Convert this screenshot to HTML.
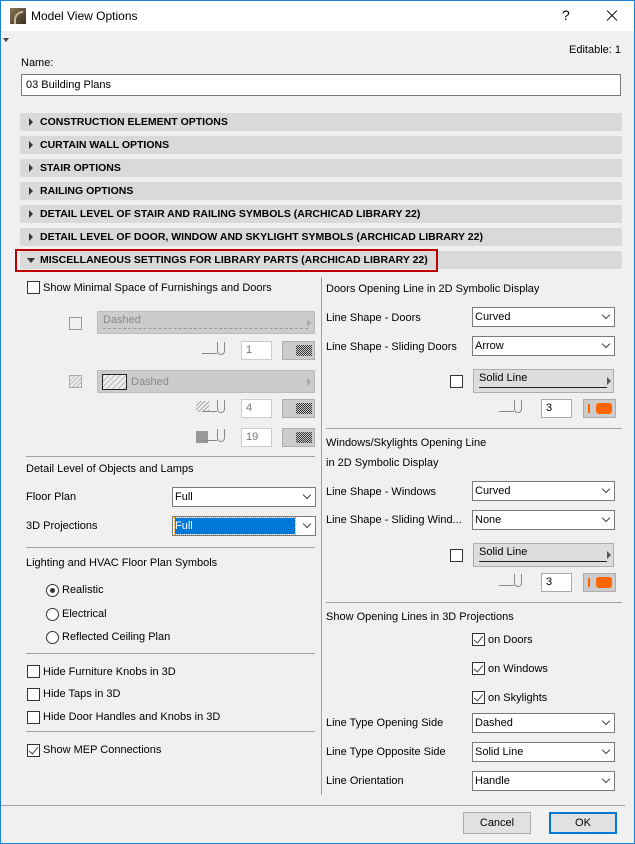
<!DOCTYPE html>
<html><head><meta charset="utf-8"><style>
*{box-sizing:border-box;margin:0;padding:0}
body{width:635px;height:844px;position:relative;background:#f0f0f0;font-family:"Liberation Sans",sans-serif;font-size:11px;color:#000;overflow:hidden}
.a{position:absolute}
.t{position:absolute;line-height:14px;white-space:nowrap}
.hd{position:absolute;left:20px;width:602px;height:18px;background:#d9d9d9;border-radius:2px;font-weight:bold;font-size:10.5px;line-height:18px;padding-left:20px}
.hd:before{content:"";position:absolute;left:9px;top:5px;border-left:4px solid #333;border-top:4px solid transparent;border-bottom:4px solid transparent}
.hd.o:before{left:7px;top:7px;border-top:5px solid #333;border-left:4px solid transparent;border-right:4px solid transparent;border-bottom:0}
.cb{position:absolute;width:13px;height:13px;border:1px solid #333;background:#fff}
.cb.g{border-color:#999;background:#f0f0f0}
.ck:after{content:"";position:absolute;left:3px;top:0px;width:4px;height:8px;border:solid #444;border-width:0 1.5px 1.5px 0;transform:rotate(40deg)}
.sel{position:absolute;height:20px;background:#fff;border:1px solid #7a7a7a;line-height:18px;padding-left:2px}
.sel:after{content:"";position:absolute;right:5px;top:4px;width:5px;height:5px;border:solid #444;border-width:0 1px 1px 0;transform:rotate(45deg)}
.rd{position:absolute;width:13px;height:13px;border:1px solid #333;border-radius:50%;background:#fff}
.hr{position:absolute;height:1px;background:#a0a0a0}
.inp{position:absolute;width:31px;height:19px;border:1px solid #ccc;background:#fff;line-height:17px;padding-left:4px}
.pb{position:absolute;width:33px;height:19px;background:#ccc;border:1px solid #adadad}
.pen{position:absolute;width:8px;height:13px;border:1px solid #888;border-top:0;border-radius:0 0 4px 4px}
.pen:before{content:"";position:absolute;left:-16px;bottom:0;width:15px;height:1px;background:#888}
</style></head><body>
<div class="a" style="left:0;top:0;width:635px;height:31px;background:#fff"></div>
<div class="a" style="left:0;top:0;width:1px;height:844px;background:#1883d7"></div>
<div class="a" style="right:0;top:0;width:1px;height:844px;background:#1883d7"></div>
<div class="a" style="left:0;bottom:0;width:635px;height:1px;background:#1883d7"></div>
<div class="a" style="left:0;top:0;width:635px;height:1px;background:#1883d7"></div>
<div class="a" style="left:10px;top:8px;width:16px;height:16px;background:linear-gradient(135deg,#8a7658,#3a3020)"><div class="a" style="left:4px;top:3px;width:9px;height:13px;border:2px solid #c8b898;border-bottom:0;border-right:0;border-radius:9px 0 0 0"></div></div>
<div class="t" style="left:31px;top:8px;font-size:12px;line-height:16px">Model View Options</div>
<div class="t" style="left:562px;top:7px;font-size:14px;line-height:16px">?</div>
<div class="a" style="left:605px;top:15px;width:14px;height:1px;background:#000;transform:rotate(45deg)"></div>
<div class="a" style="left:605px;top:15px;width:14px;height:1px;background:#000;transform:rotate(-45deg)"></div>
<div class="a" style="left:3px;top:38px;border-top:4px solid #444;border-left:3px solid transparent;border-right:3px solid transparent"></div>
<div class="t" style="right:14px;top:43px">Editable: 1</div>
<div class="t" style="left:21px;top:56px">Name:</div>
<div class="a" style="left:21px;top:74px;width:600px;height:22px;background:#fff;border:1px solid #7a7a7a;padding-left:4px;line-height:20px">03 Building Plans</div>
<div class="hd" style="top:113px">CONSTRUCTION ELEMENT OPTIONS</div>
<div class="hd" style="top:136px">CURTAIN WALL OPTIONS</div>
<div class="hd" style="top:159px">STAIR OPTIONS</div>
<div class="hd" style="top:182px">RAILING OPTIONS</div>
<div class="hd" style="top:205px">DETAIL LEVEL OF STAIR AND RAILING SYMBOLS (ARCHICAD LIBRARY 22)</div>
<div class="hd" style="top:228px">DETAIL LEVEL OF DOOR, WINDOW AND SKYLIGHT SYMBOLS (ARCHICAD LIBRARY 22)</div>
<div class="hd o" style="top:251px">MISCELLANEOUS SETTINGS FOR LIBRARY PARTS (ARCHICAD LIBRARY 22)</div>
<div class="a" style="left:15px;top:249px;width:423px;height:23px;border:2px solid #c00000"></div>
<div class="a" style="left:321px;top:277px;width:1px;height:518px;background:#a0a0a0"></div>

<!-- left -->
<div class="cb" style="left:27px;top:281px"></div>
<div class="t" style="left:43px;top:281px">Show Minimal Space of Furnishings and Doors</div>
<div class="cb g" style="left:69px;top:317px"></div>
<div class="a" style="left:97px;top:311px;width:218px;height:23px;background:#ccc;border:1px solid #bbb"><div class="t" style="left:5px;top:1px;color:#888">Dashed</div><div class="a" style="left:5px;top:16px;width:205px;border-top:1px dashed #999"></div><div class="a" style="right:3px;top:7px;border-left:4px solid #aaa;border-top:4px solid transparent;border-bottom:4px solid transparent"></div></div>
<div class="pen" style="left:217px;top:342px"></div>
<div class="inp" style="left:241px;top:341px;color:#777">1</div>
<div class="pb" style="left:282px;top:341px"><div class="a" style="left:13px;top:3px;width:16px;height:11px;background:repeating-conic-gradient(#333 0 25%,#ccc 0 50%) 0 0/2px 2px"></div></div>
<div class="a" style="left:69px;top:375px;width:13px;height:13px;background:repeating-linear-gradient(135deg,#bbb 0 1px,#eee 1px 3px);border:1px solid #aaa"></div>
<div class="a" style="left:97px;top:370px;width:218px;height:23px;background:#ccc;border:1px solid #bbb"><div class="a" style="left:4px;top:3px;width:25px;height:16px;border:1px solid #222;background:repeating-linear-gradient(135deg,#bbb 0 1px,#eee 1px 4px)"></div><div class="t" style="left:33px;top:4px;color:#888">Dashed</div><div class="a" style="right:3px;top:7px;border-left:4px solid #aaa;border-top:4px solid transparent;border-bottom:4px solid transparent"></div></div>
<div class="a" style="left:196px;top:401px;width:13px;height:11px;background:repeating-linear-gradient(135deg,#aaa 0 1px,transparent 1px 3px)"></div>
<div class="pen" style="left:217px;top:400px"></div>
<div class="inp" style="left:241px;top:399px;color:#777">4</div>
<div class="pb" style="left:282px;top:399px"><div class="a" style="left:13px;top:3px;width:16px;height:11px;background:repeating-conic-gradient(#333 0 25%,#ccc 0 50%) 0 0/2px 2px"></div></div>
<div class="a" style="left:196px;top:431px;width:12px;height:12px;background:#999"></div>
<div class="pen" style="left:217px;top:429px"></div>
<div class="inp" style="left:241px;top:428px;color:#777">19</div>
<div class="pb" style="left:282px;top:428px"><div class="a" style="left:13px;top:3px;width:16px;height:11px;background:repeating-conic-gradient(#333 0 25%,#ccc 0 50%) 0 0/2px 2px"></div></div>
<div class="hr" style="left:26px;top:456px;width:289px"></div>
<div class="t" style="left:26px;top:462px">Detail Level of Objects and Lamps</div>
<div class="t" style="left:26px;top:490px">Floor Plan</div>
<div class="sel" style="left:172px;top:487px;width:144px">Full</div>
<div class="t" style="left:26px;top:519px">3D Projections</div>
<div class="sel" style="left:172px;top:516px;width:144px"><span class="a" style="left:2px;top:1px;width:120px;height:16px;background:#0078d7;color:#fff;line-height:16px;outline:1px dotted #f90">Full</span></div>
<div class="hr" style="left:26px;top:547px;width:289px"></div>
<div class="t" style="left:26px;top:556px">Lighting and HVAC Floor Plan Symbols</div>
<div class="rd" style="left:46px;top:584px"><div class="a" style="left:3px;top:3px;width:5px;height:5px;border-radius:50%;background:#333"></div></div>
<div class="t" style="left:62px;top:583px">Realistic</div>
<div class="rd" style="left:46px;top:608px"></div>
<div class="t" style="left:62px;top:607px">Electrical</div>
<div class="rd" style="left:46px;top:631px"></div>
<div class="t" style="left:62px;top:630px">Reflected Ceiling Plan</div>
<div class="hr" style="left:26px;top:653px;width:289px"></div>
<div class="cb" style="left:27px;top:665px"></div><div class="t" style="left:43px;top:665px">Hide Furniture Knobs in 3D</div>
<div class="cb" style="left:27px;top:688px"></div><div class="t" style="left:43px;top:687px">Hide Taps in 3D</div>
<div class="cb" style="left:27px;top:711px"></div><div class="t" style="left:43px;top:710px">Hide Door Handles and Knobs in 3D</div>
<div class="hr" style="left:26px;top:731px;width:289px"></div>
<div class="cb ck" style="left:27px;top:744px"></div><div class="t" style="left:43px;top:743px">Show MEP Connections</div>

<!-- right -->
<div class="t" style="left:326px;top:282px">Doors Opening Line in 2D Symbolic Display</div>
<div class="t" style="left:326px;top:311px">Line Shape - Doors</div>
<div class="sel" style="left:472px;top:307px;width:143px">Curved</div>
<div class="t" style="left:326px;top:340px">Line Shape - Sliding Doors</div>
<div class="sel" style="left:472px;top:336px;width:143px">Arrow</div>
<div class="cb" style="left:450px;top:375px"></div>
<div class="a" style="left:473px;top:369px;width:141px;height:24px;background:#ddd;border:1px solid #adadad"><div class="t" style="left:5px;top:1px">Solid Line</div><div class="a" style="left:5px;top:17px;width:128px;height:1px;background:#222"></div><div class="a" style="right:2px;top:7px;border-left:4px solid #555;border-top:4px solid transparent;border-bottom:4px solid transparent"></div></div>
<div class="pen" style="left:514px;top:400px"></div>
<div class="inp" style="left:541px;top:399px;border-color:#aaa">3</div>
<div class="pb" style="left:583px;top:399px;background:#ccc"><div class="a" style="left:4px;top:4px;width:2px;height:9px;background:#f60"></div><div class="a" style="left:12px;top:3px;width:16px;height:11px;background:#f60;border-radius:3px"></div></div>
<div class="hr" style="left:326px;top:428px;width:296px"></div>
<div class="t" style="left:326px;top:436px">Windows/Skylights Opening Line</div>
<div class="t" style="left:326px;top:456px">in 2D Symbolic Display</div>
<div class="t" style="left:326px;top:485px">Line Shape - Windows</div>
<div class="sel" style="left:472px;top:481px;width:143px">Curved</div>
<div class="t" style="left:326px;top:513px">Line Shape - Sliding Wind...</div>
<div class="sel" style="left:472px;top:510px;width:143px">None</div>
<div class="cb" style="left:450px;top:549px"></div>
<div class="a" style="left:473px;top:543px;width:141px;height:24px;background:#ddd;border:1px solid #adadad"><div class="t" style="left:5px;top:1px">Solid Line</div><div class="a" style="left:5px;top:17px;width:128px;height:1px;background:#222"></div><div class="a" style="right:2px;top:7px;border-left:4px solid #555;border-top:4px solid transparent;border-bottom:4px solid transparent"></div></div>
<div class="pen" style="left:514px;top:574px"></div>
<div class="inp" style="left:541px;top:573px;border-color:#aaa">3</div>
<div class="pb" style="left:583px;top:573px"><div class="a" style="left:4px;top:4px;width:2px;height:9px;background:#f60"></div><div class="a" style="left:12px;top:3px;width:16px;height:11px;background:#f60;border-radius:3px"></div></div>
<div class="hr" style="left:326px;top:602px;width:296px"></div>
<div class="t" style="left:326px;top:610px">Show Opening Lines in 3D Projections</div>
<div class="cb ck" style="left:472px;top:633px"></div><div class="t" style="left:488px;top:633px">on Doors</div>
<div class="cb ck" style="left:472px;top:662px"></div><div class="t" style="left:488px;top:662px">on Windows</div>
<div class="cb ck" style="left:472px;top:691px"></div><div class="t" style="left:488px;top:691px">on Skylights</div>
<div class="t" style="left:326px;top:716px">Line Type Opening Side</div>
<div class="sel" style="left:472px;top:713px;width:143px">Dashed</div>
<div class="t" style="left:326px;top:745px">Line Type Opposite Side</div>
<div class="sel" style="left:472px;top:742px;width:143px">Solid Line</div>
<div class="t" style="left:326px;top:774px">Line Orientation</div>
<div class="sel" style="left:472px;top:771px;width:143px">Handle</div>

<div class="hr" style="left:1px;top:805px;width:624px"></div>
<div class="a" style="left:463px;top:812px;width:68px;height:22px;background:#e1e1e1;border:1px solid #adadad;text-align:center;line-height:20px">Cancel</div>
<div class="a" style="left:549px;top:812px;width:68px;height:22px;background:#e1e1e1;border:2px solid #0078d7;text-align:center;line-height:18px">OK</div>
</body></html>
